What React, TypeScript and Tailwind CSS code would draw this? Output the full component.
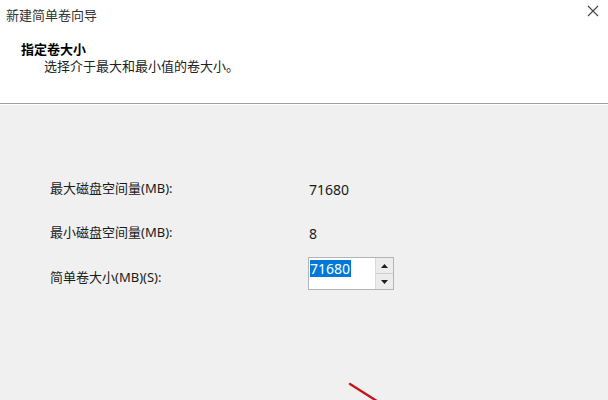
import React from "react";

const font = {
  fontFamily: '"Segoe UI", "Noto Sans", "Noto Sans CJK SC", sans-serif',
};

function SpinBox({ value }: { value: string }) {
  return (
    <div className="flex w-[86px] h-[33px] border border-[#b4b4b4] bg-white">
      <div className="flex-1 pl-[1px] pt-[2px]">
        <span className="bg-[#0078d7] text-white text-[14px] leading-[17px] inline-block pr-[1px]">
          {value}
        </span>
      </div>
      <div className="w-[18px] flex flex-col border-l border-[#d9d9d9]">
        <div className="flex-1 bg-[#ececec] flex items-center justify-center border-b border-[#d0d0d0]">
          <svg width="7" height="4" viewBox="0 0 7 4">
            <path d="M0 4 L3.5 0 L7 4 Z" fill="#1e1e1e" />
          </svg>
        </div>
        <div className="flex-1 bg-[#ececec] flex items-center justify-center">
          <svg width="7" height="4" viewBox="0 0 7 4">
            <path d="M0 0 L7 0 L3.5 4 Z" fill="#1e1e1e" />
          </svg>
        </div>
      </div>
    </div>
  );
}

export default function App() {
  const rows = [
    { label: "最大磁盘空间量(MB):", value: "71680" },
    { label: "最小磁盘空间量(MB):", value: "8" },
  ];

  return (
    <div
      className="w-[608px] h-[400px] bg-[#f0f0f0] text-[#1a1a1a] overflow-hidden relative flex flex-col"
      style={font}
    >
      <div className="h-[104px] shrink-0 bg-white border-b border-[#a0a0a0] flex flex-col">
        <div className="flex items-start justify-between">
          <p className="pl-[6px] pt-[7px] text-[13px] leading-[16px] text-[#333]">
            新建简单卷向导
          </p>
          <svg width="12" height="12" viewBox="0 0 12 12" className="mt-[5px] mr-[9px]">
            <path d="M1 1 L11 11 M11 1 L1 11" stroke="#444" strokeWidth="1.1" />
          </svg>
        </div>
        <p className="ml-[21px] mt-[18px] text-[13px] leading-[16px] font-bold text-black">
          指定卷大小
        </p>
        <p className="ml-[44px] mt-[1px] text-[13px] leading-[16px] text-[#222]">
          选择介于最大和最小值的卷大小。
        </p>
      </div>
      <div className="border-t border-white flex flex-col pl-[50px] pt-[74px]">
        {rows.map((row, i) => (
          <div
            key={row.label}
            className={`flex items-center h-[20px] text-[13px] ${i > 0 ? "mt-[24px]" : ""}`}
          >
            <span className="w-[259px]">{row.label}</span>
            <span className="text-[14px]">{row.value}</span>
          </div>
        ))}
        <div className="flex items-center mt-[14px] text-[13px]">
          <span className="w-[258px] pt-[8px]">简单卷大小(MB)(S):</span>
          <SpinBox value="71680" />
        </div>
      </div>
      <svg
        width="608"
        height="400"
        className="absolute left-0 top-0 pointer-events-none"
      >
        <path d="M350 384 L380 403" stroke="#c4161c" strokeWidth="2.4" strokeLinecap="round" />
      </svg>
    </div>
  );
}
